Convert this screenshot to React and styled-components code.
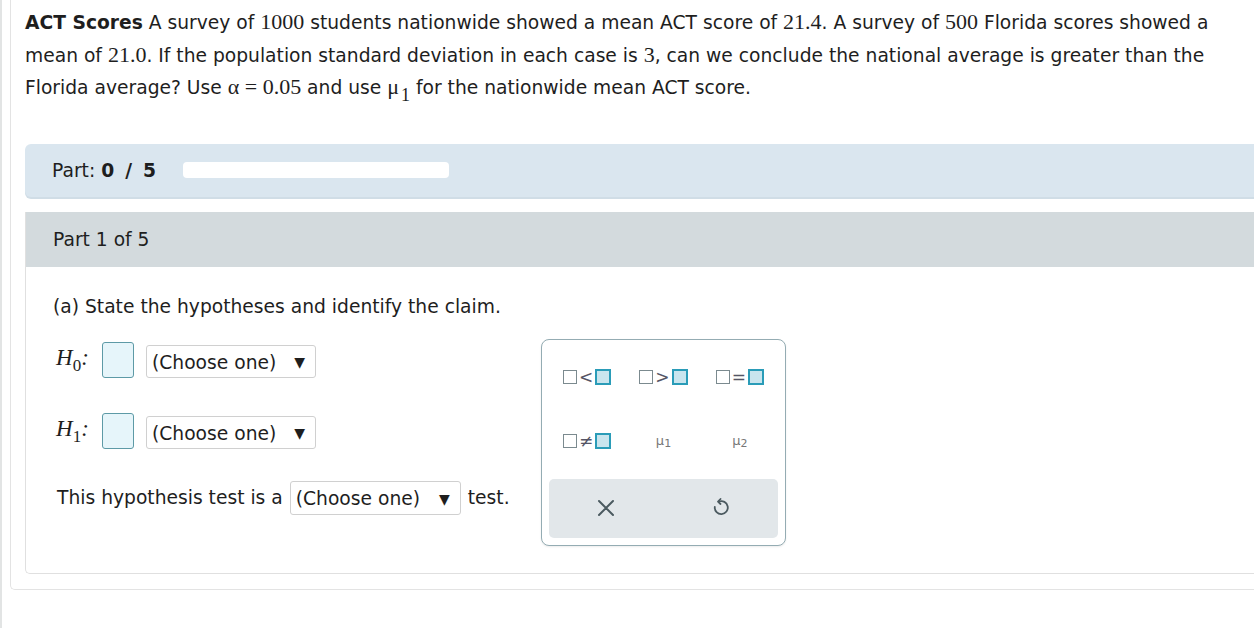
import React from 'react'
import styled, { createGlobalStyle } from 'styled-components'

const Global = createGlobalStyle`
body{
  margin: 0;
  background: #fff;
  font-family: "DejaVu Sans", Verdana, sans-serif;
  color: #1e1e1e;
  overflow: hidden;
}
`

const Frame = styled.div`
border-left: 2px solid #e2e4e4;
height: 628px;
box-sizing: border-box;
padding-left: 8px;
`
const Sheet = styled.div`
border-left: 1px solid #e3e3e3;
border-bottom: 1px solid #e3e3e3;
border-bottom-left-radius: 5px;
height: 590px;
box-sizing: border-box;
padding: 7px 0 0 14px;
`
const Question = styled.p`
margin: 0;
font-size: 18.7px;
line-height: 32.5px;
padding-right: 20px;
`
const M = styled.span`
font-family: "Liberation Serif", "Times New Roman", serif;
font-size: 22px;
line-height: 1;
`
const Sub = styled.sub`
font-family: "Liberation Serif", serif;
font-size: 18px;
vertical-align: -7px;
line-height: 0;
margin-left: 2px;
`
const ProgressBar = styled.div`
margin-top: 39px;
height: 53px;
background: #dae6ef;
border-radius: 6px 0 0 6px;
box-shadow: 0 2px 0 #d0dde6;
display: flex;
align-items: center;
padding-left: 27px;
font-size: 18.7px;
gap: 27px;
`
const Bold = styled.b`
word-spacing: 4.5px;
`
const Track = styled.div`
width: 266px;
height: 16px;
background: #fff;
border-radius: 4px;
`
const Card = styled.div`
margin-top: 15px;
border-left: 1px solid #e0e0e0;
border-bottom: 1px solid #e0e0e0;
border-bottom-left-radius: 5px;
height: 362px;
box-sizing: border-box;
`
const CardHead = styled.div`
height: 55px;
background: #d3dadd;
display: flex;
align-items: center;
padding-left: 27px;
font-size: 18.7px;
`
const Body = styled.div`
padding: 28px 0 0 27px;
font-size: 18.7px;
`
const Prompt = styled.div`
line-height: 24px;
`
const Work = styled.div`
display: flex;
margin-top: 20px;
`
const Answers = styled.div`
width: 488px;
padding-top: 3px;
display: flex;
flex-direction: column;
`
const HRow = styled.div`
display: flex;
align-items: center;
height: 36px;
margin-bottom: ${p => p.gap || 0}px;
padding-left: 3px;
`
const HLabel = styled.span`
font-family: "Liberation Serif", serif;
font-style: italic;
font-size: 23px;
width: 46px;
position: relative;
top: -2px;
`
const HSub = styled.span`
font-style: normal;
font-size: 17px;
position: relative;
top: 6px;
`
const InputBox = styled.div`
width: 30px;
height: 34px;
border: 1px solid #5d9aa6;
background: #e6f5fa;
border-radius: 3px;
margin-right: 12px;
`
const Select = styled.div`
display: inline-flex;
align-items: center;
justify-content: space-between;
width: ${p => p.w || 170}px;
height: ${p => p.h || 33}px;
box-sizing: border-box;
border: 1px solid #d0d0d0;
border-radius: 3px;
padding: 2px 10px 0 5px;
font-size: 18.7px;
background: #fff;
margin-top: ${p => p.top ?? 3}px;
`
const Arrow = styled.span`
font-size: 14px;
`
const TestRow = styled.div`
display: flex;
align-items: center;
gap: 7px;
margin-top: 32px;
padding-left: 4px;
`
const Palette = styled.div`
width: 245px;
height: 207px;
box-sizing: border-box;
border: 1px solid #94acb3;
border-radius: 8px;
padding: 5px 7px 7px;
display: flex;
flex-direction: column;
background: #fff;
box-shadow: 0 1px 2px rgba(0,0,0,0.08);
`
const Keys = styled.div`
display: grid;
grid-template-columns: repeat(3, 1fr);
grid-auto-rows: 64px;
`
const Key = styled.div`
display: flex;
align-items: center;
justify-content: center;
gap: 2px;
font-size: 17px;
color: #556;
`
const Blank = styled.span`
width: 12px;
height: 12px;
border: ${p => p.filled ? '2px solid #2a9cb8' : '1.5px solid #7b8a8f'};
background: ${p => p.filled ? '#c9e5ee' : '#fff'};
display: inline-block;
`
const Mu = styled.span`
font-size: 13px;
color: #777;
sub{
  font-size: 11px;
  vertical-align: -2px;
  line-height: 0;
}
`
const Tools = styled.div`
margin-top: 6px;
height: 59px;
background: #e2e7ea;
border-radius: 5px;
display: grid;
grid-template-columns: 1fr 1fr;
align-items: center;
justify-items: center;
`

const Pair = ({ op }) => (
  <Key>
    <Blank />
    <span>{op}</span>
    <Blank filled />
  </Key>
)

const Choose = (props) => (
  <Select {...props}>
    (Choose one) <Arrow>▼</Arrow>
  </Select>
)

export default function App() {
  return (
    <>
      <Global />
      <Frame>
        <Sheet>
          <Question>
            <b>ACT Scores</b> A survey of <M>1000</M> students nationwide showed a mean ACT score of <M>21.4</M>. A survey of <M>500</M> Florida scores showed a mean of <M>21.0</M>. If the population standard deviation in each case is <M>3</M>, can we conclude the national average is greater than the Florida average? Use <M>α = 0.05</M> and use <M>μ</M><Sub>1</Sub> for the nationwide mean ACT score.
          </Question>
          <ProgressBar>
            <span>Part: <Bold>0 / 5</Bold></span>
            <Track />
          </ProgressBar>
          <Card>
            <CardHead>Part 1 of 5</CardHead>
            <Body>
              <Prompt>(a) State the hypotheses and identify the claim.</Prompt>
              <Work>
                <Answers>
                  <HRow gap={35}>
                    <HLabel>H<HSub>0</HSub>:</HLabel>
                    <InputBox />
                    <Choose />
                  </HRow>
                  <HRow>
                    <HLabel>H<HSub>1</HSub>:</HLabel>
                    <InputBox />
                    <Choose />
                  </HRow>
                  <TestRow>
                    This hypothesis test is a <Choose w={171} h={34} top={0} /> test.
                  </TestRow>
                </Answers>
                <Palette>
                  <Keys>
                    <Pair op="<" />
                    <Pair op=">" />
                    <Pair op="=" />
                    <Pair op="≠" />
                    <Key><Mu>μ<sub>1</sub></Mu></Key>
                    <Key><Mu>μ<sub>2</sub></Mu></Key>
                  </Keys>
                  <Tools>
                    <svg width="18" height="18" viewBox="0 0 18 18">
                      <path d="M2 2 L16 16 M16 2 L2 16" stroke="#4b5a60" strokeWidth="2" strokeLinecap="round" />
                    </svg>
                    <svg width="18" height="20" viewBox="0 0 18 20">
                      <path d="M7 3.5 A6.5 6.5 0 1 1 2.8 9" fill="none" stroke="#4b5a60" strokeWidth="1.8" strokeLinecap="round" />
                      <path d="M8.5 1 L6 3.6 L8.5 6" fill="none" stroke="#4b5a60" strokeWidth="1.8" strokeLinecap="round" strokeLinejoin="round" />
                    </svg>
                  </Tools>
                </Palette>
              </Work>
            </Body>
          </Card>
        </Sheet>
      </Frame>
    </>
  )
}
